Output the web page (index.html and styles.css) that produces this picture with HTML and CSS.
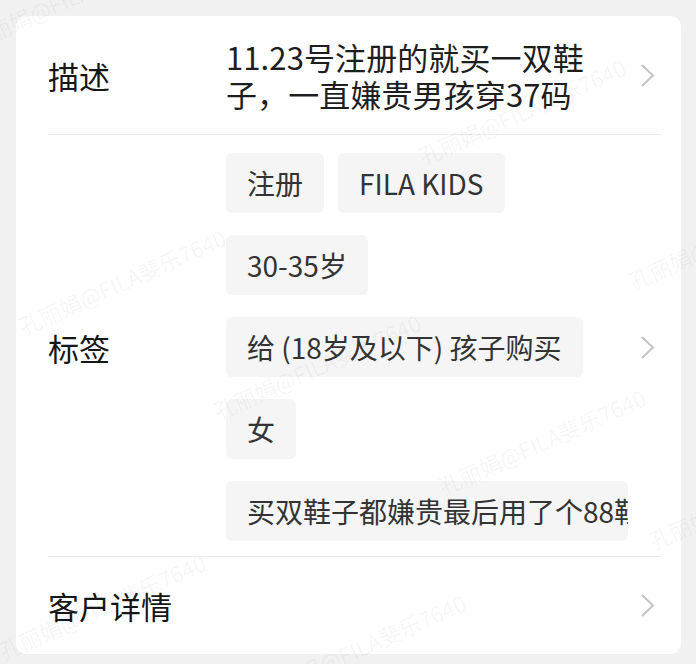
FILE: index.html
```html
<!DOCTYPE html>
<html lang="zh-CN">
<head>
<meta charset="UTF-8">
<meta name="viewport" content="width=device-width, initial-scale=1.0">
<title>客户信息</title>
<link rel="stylesheet" href="styles.css">
</head>
<body>
<div class="page">
    <div class="card">
        <div class="row row-desc">
            <div class="label">描述</div>
            <div class="value desc">11.23号注册的就买一双鞋子，一直嫌贵男孩穿37码</div>
            <span class="arrow">
                <svg width="15" height="25" viewBox="0 0 15 25"><path d="M2 2 L13 12.5 L2 23" /></svg>
            </span>
        </div>
        <div class="divider"></div>
        <div class="row row-tags">
            <div class="label">标签</div>
            <div class="value tags">
                <span class="tag">注册</span>
                <span class="tag">FILA KIDS</span>
                <span class="tag">30-35岁</span>
                <span class="tag">给 (18岁及以下) 孩子购买</span>
                <span class="tag">女</span>
                <span class="tag">买双鞋子都嫌贵最后用了个88鞋券才买的</span>
            </div>
            <span class="arrow">
                <svg width="15" height="25" viewBox="0 0 15 25"><path d="M2 2 L13 12.5 L2 23" /></svg>
            </span>
        </div>
        <div class="divider"></div>
        <div class="row row-detail">
            <div class="label">客户详情</div>
            <div class="value"></div>
            <span class="arrow">
                <svg width="15" height="25" viewBox="0 0 15 25"><path d="M2 2 L13 12.5 L2 23" /></svg>
            </span>
        </div>
    </div>

    <!-- watermark layer -->
    <div class="watermarks">
        <span class="wm wm1">孔丽娟@FILA斐乐7640</span>
        <span class="wm wm2">孔丽娟@FILA斐乐7640</span>
        <span class="wm wm3">孔丽娟@FILA斐乐7640</span>
        <span class="wm wm4">孔丽娟@FILA斐乐7640</span>
        <span class="wm wm5">孔丽娟@FILA斐乐7640</span>
        <span class="wm wm6">孔丽娟@FILA斐乐7640</span>
        <span class="wm wm7">孔丽娟@FILA斐乐7640</span>
        <span class="wm wm8">孔丽娟@FILA斐乐7640</span>
        <span class="wm wm9">孔丽娟@FILA斐乐7640</span>
    </div>
</div>
</body>
</html>
```

FILE: styles.css
```css
* {
    box-sizing: border-box;
}
body {
    margin: 0;
    background: #f1f1f1;
    font-family: "Noto Sans CJK SC", "Noto Sans", sans-serif;
}
.page {
    position: relative;
    width: 696px;
    height: 664px;
    padding: 16px 15px 0 16px;
    overflow: hidden;
}
.card {
    background: #fff;
    border-radius: 10px;
}
.row {
    display: flex;
    align-items: center;
    padding-left: 32px;
    padding-right: 26px;
}
.row-desc {
    padding-top: 22px;
    padding-bottom: 22px;
}
.row-tags {
    padding-top: 18px;
    padding-bottom: 15px;
}
.row-detail {
    padding-top: 30px;
    padding-bottom: 30px;
}
.label {
    width: 178px;
    flex-shrink: 0;
    font-size: 31px;
    line-height: 37px;
    color: #161616;
}
.value {
    width: 402px;
    flex-shrink: 0;
}
.desc {
    padding-right: 30px;
    font-size: 31px;
    line-height: 37px;
    color: #1e1e1e;
    letter-spacing: 0.1px;
}
.tags {
    display: flex;
    flex-wrap: wrap;
    column-gap: 14px;
    row-gap: 22px;
}
.tag {
    display: block;
    max-width: 100%;
    height: 60px;
    padding: 0 21px;
    line-height: 60px;
    font-size: 28px;
    color: #333;
    background: #f5f5f5;
    border-radius: 6px;
    white-space: nowrap;
    overflow: hidden;
}
.arrow {
    margin-left: 12px;
    width: 15px;
    height: 25px;
}
.arrow svg {
    display: block;
}
.arrow path {
    fill: none;
    stroke: #c4c4c4;
    stroke-width: 2;
}
.divider {
    height: 1px;
    margin: 0 19px 0 32px;
    background: #ececec;
}
.watermarks {
    position: absolute;
    left: 0;
    top: 0;
    width: 100%;
    height: 100%;
    pointer-events: none;
}
.wm {
    position: absolute;
    font-size: 22px;
    white-space: nowrap;
    color: rgba(0, 0, 0, 0.05);
    transform: rotate(-24deg);
    transform-origin: center;
}
.wm1 { left: 410px; top: 95px; }
.wm2 { left: 10px; top: 265px; }
.wm3 { left: 205px; top: 350px; }
.wm4 { left: 430px; top: 425px; }
.wm5 { left: 620px; top: 220px; }
.wm6 { left: -10px; top: 590px; }
.wm7 { left: 250px; top: 630px; }
.wm8 { left: 640px; top: 480px; }
.wm9 { left: -40px; top: -20px; }
```
